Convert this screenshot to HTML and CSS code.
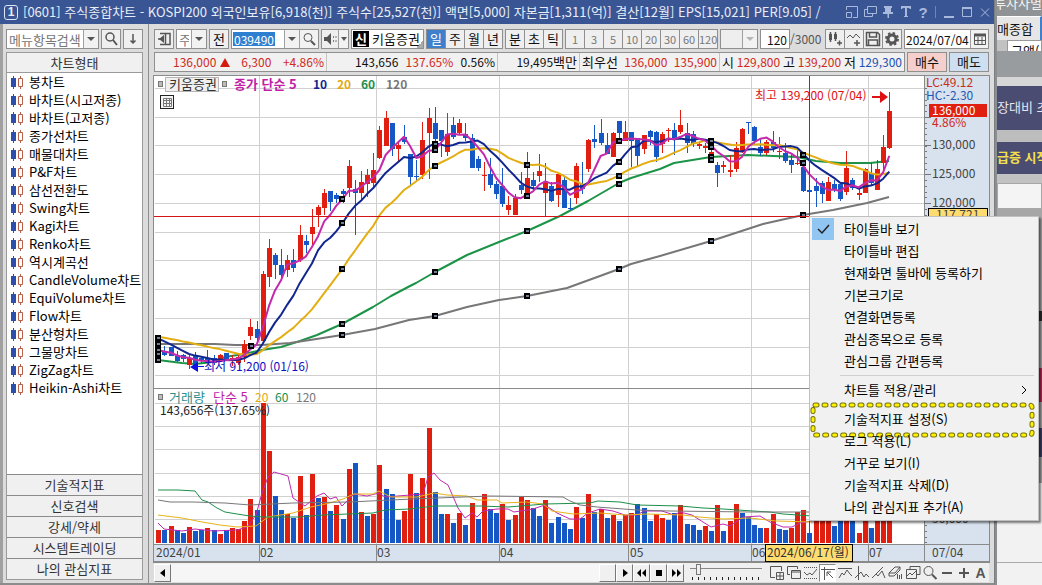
FILE: index.html
```html
<!DOCTYPE html>
<html lang="ko">
<head>
<meta charset="utf-8">
<title>[0601] 주식종합차트</title>
<link rel="stylesheet" href="styles.css">
</head>
<body>
<div class="desktop">
  <section class="window">
    <header class="titlebar">
      <span class="win-no">1</span>
      <h1 class="title">[0601] 주식종합차트 - KOSPI200 외국인보유[6,918(천)] 주식수[25,527(천)] 액면[5,000] 자본금[1,311(억)] 결산[12월] EPS[15,021] PER[9.05] /</h1>
      <div class="win-tools">
        <button aria-label="화면 크기"><svg viewBox="0 0 14 14"><path d="M1.500 5V1.500h11v11H8M1.500 7.500h5v5h-5z"/></svg></button>
        <button aria-label="화면 복사"><svg viewBox="0 0 14 14"><path d="M4.500 1.500h9v7h-9zM4 4.500H1.500v7h8V9"/></svg></button>
        <button aria-label="고정"><svg viewBox="0 0 14 14"><path class="fill" d="M3 1h8v2h-1v4h2v2H8v4H6.500V9H2V7h2V3H3z"/></svg></button>
        <button aria-label="글꼴"><svg viewBox="0 0 14 14"><path class="fill" d="M2 1h10v3h-1L10 3H8v8h1v1H5v-1h1V3H4L3 4H2z"/></svg></button>
        <button class="help" aria-label="도움말">?</button>
        <i class="bar"></i>
        <button aria-label="최소화"><svg viewBox="0 0 14 14"><path d="M2 12h10" stroke-width="2"/></svg></button>
        <button aria-label="최대화"><svg viewBox="0 0 14 14"><path d="M2.500 3.500h9v8h-9z"/><path d="M2 3h10" stroke-width="2"/></svg></button>
        <button aria-label="닫기"><svg viewBox="0 0 14 14"><path d="M3 3.500l8 8M11 3.500l-8 8"/></svg></button>
      </div>
    </header>
    <div class="body">
      <aside class="side">
        <div class="side-search">
          <div class="combo grow"><input class="field muted" aria-label="메뉴항목검색" value="메뉴항목검색"><button class="drop" aria-label="목록 열기"></button></div>
          <button class="btn sq" aria-label="검색"><svg viewBox="0 0 16 16"><circle cx="7" cy="6" r="4" stroke-width="1.500"/><path d="M10 9l4 5" stroke-width="2"/></svg></button>
          <button class="btn sq" aria-label="아래로"><svg viewBox="0 0 16 16"><path d="M8 3v9M5.500 9.500L8 12l2.500-2.500" stroke-width="1.500"/></svg></button>
        </div>
        <nav class="tree">
          <button class="tree-head">차트형태</button>
          <ul class="types" id="types"></ul>
          <button class="tree-tab">기술적지표</button>
          <button class="tree-tab">신호검색</button>
          <button class="tree-tab">강세/약세</button>
          <button class="tree-tab">시스템트레이딩</button>
          <button class="tree-tab">나의 관심지표</button>
        </nav>
      </aside>
      <main class="main">
        <div class="toolbar">
          <button class="btn sq" aria-label="메뉴 접기"><svg viewBox="0 0 16 16"><path d="M4 2.500h10v11H4M9.500 2v11M2 8h4" stroke-width="1.500"/><path class="fill" d="M8 4v8L3 8z"/></svg></button>
          <div class="combo c-kind"><input class="field muted" aria-label="구분" value="주"><button class="drop" aria-label="구분 선택"></button></div>
          <button class="btn sq">전</button>
          <div class="combo c-code"><input class="field num code" aria-label="종목코드" value="039490"><button class="drop" aria-label="최근 종목"></button><button class="drop find" aria-label="종목 검색"><svg viewBox="0 0 16 16"><circle cx="7" cy="6.500" r="4"/><path d="M10 10l4 4" stroke-width="2"/></svg></button></div>
          <div class="group c-sound"><button class="btn" aria-label="소리"><svg viewBox="0 0 16 16"><path class="fill" d="M2 6h3l4-4v12l-4-4H2z"/><path d="M11 6h1M11 10h1M13.500 6h1M13.500 10h1" stroke-width="1.500"/></svg></button><button class="drop" aria-label="소리 선택"></button></div>
          <div class="stock"><b class="tag">신</b><span>키움증권</span></div>
          <div class="group cells"><button class="btn on">일</button><button class="btn">주</button><button class="btn">월</button><button class="btn">년</button></div>
          <div class="group cells"><button class="btn">분</button><button class="btn">초</button><button class="btn">틱</button></div>
          <div class="group cells small muted"><button class="btn">1</button><button class="btn">3</button><button class="btn">5</button><button class="btn">10</button><button class="btn">20</button><button class="btn">30</button><button class="btn">60</button><button class="btn">120</button></div>
          <div class="combo c-blank"><input class="field" aria-label="사용자 주기" disabled><button class="drop off" aria-label="주기 선택" disabled></button></div>
          <div class="count num"><input class="field right num" aria-label="조회 봉수" value="120"><span>/3000</span></div>
          <div class="group cells icons">
            <button class="btn" aria-label="차트 추가"><svg viewBox="0 0 16 16"><path d="M3.500 1v10M8.500 1v9M10 12h5M12.500 9.500v5" stroke-width="1.500"/><path class="fill" d="M2 3h3v6H2zM7 3h3v5H7z"/></svg></button>
            <button class="btn" aria-label="지표 추가"><svg viewBox="0 0 16 16"><path d="M1 7l3-3 3 3 3-4 4 4" stroke-width="1"/><path d="M8 12h6M11 9v6" stroke-width="1.500"/></svg></button>
            <button class="btn" aria-label="저장"><svg viewBox="0 0 16 16"><path d="M1.500 1.500h11l2 2v11h-13zM4.500 2v4h7V2M3.500 14V9h9v5" stroke-width="1.500"/></svg></button>
            <button class="btn" aria-label="설정"><svg viewBox="0 0 16 16"><circle cx="8" cy="8" r="4" stroke-width="3"/><circle cx="8" cy="8" r="6" stroke-width="2" stroke-dasharray="2.400 2.300"/></svg></button>
          </div>
          <div class="combo c-date"><input class="field num" aria-label="기준일" value="2024/07/04"><button class="drop cal" aria-label="달력"><svg viewBox="0 0 16 16"><path d="M2.500 4v9.500h11V4M3 9.500h10M6 6v7M10 6v7" stroke-width="1"/><path d="M2 4h12" stroke-width="3"/></svg></button></div>
        </div>
        <div class="quote">
          <div class="quote-box num">
            <div class="q q1 red"><span>136,000 <i class="up"></i></span><span>6,300</span><span>+4.86%</span></div>
            <div class="q q2"><span>143,656</span><span class="red">137.65%</span><span>0.56%</span></div>
            <div class="q q3"><span>19,495<small>백만</small></span></div>
            <div class="q q4"><small>최우선</small><span class="red">136,000</span><span class="red">135,900</span></div>
            <div class="q q5"><small>시</small><span class="red">129,800</span><small>고</small><span class="red">139,200</span><small>저</small><span class="blue">129,300</span></div>
          </div>
          <button class="btn buy">매수</button>
          <button class="btn sell">매도</button>
        </div>
        <div class="chart"><svg id="chart" viewBox="154 76 835 486" role="img" aria-label="키움증권 일봉 차트"></svg></div>
        <div class="transport">
          <button class="raised" aria-label="왼쪽으로"><svg viewBox="0 0 16 16"><path d="M10 4v8L5 8z"/></svg></button>
          <div class="track"></div>
          <div class="play">
            <button class="raised" aria-label="스크롤 막대"></button>
            <button class="raised" aria-label="재생"><svg viewBox="0 0 16 16"><path d="M6 4v8l5-4z"/></svg></button>
            <button class="raised" aria-label="뒤로"><svg viewBox="0 0 16 16"><path d="M7 4v8L3 8zM12 4v8L8 8z"/></svg></button>
            <button class="raised" aria-label="정지"><svg viewBox="0 0 16 16"><path d="M5 5h6v6H5z"/></svg></button>
            <button class="raised" aria-label="앞으로"><svg viewBox="0 0 16 16"><path d="M4 4v8l4-4zM9 4v8l4-4z"/></svg></button>
          </div>
          <div class="speed"><input type="range" aria-label="재생 속도" min="0" max="11" value="1"></div>
          <div class="tools">
            <button aria-label="화면 추가"><svg viewBox="0 0 16 16"><path d="M6 12.500H1.500v-11h11V6M7.500 7.500h7v7h-7zM11 8v6M8 11h6"/></svg></button>
            <button aria-label="화면 겹침"><svg viewBox="0 0 16 16"><path d="M4 9.500H1.500v-8h10V4M5.500 5.500h9v8h-9zM5 7h10"/></svg></button>
            <button aria-label="구간"><svg viewBox="0 0 16 16"><path d="M1 2.500h13M1 13.500h13" stroke-dasharray="1 1"/><path d="M1 7l3 3 3-2 2 2 5-6"/></svg></button>
            <button class="pressed" aria-label="십자선"><svg viewBox="0 0 16 16"><path d="M1 4.500h14M4.500 2v13M7 7l6 6M7 11V7h4"/></svg></button>
            <button aria-label="수평선"><svg viewBox="0 0 16 16"><path d="M1 3.500h14M2 13l3-5 2 2 3-5 3 4 2 2"/></svg></button>
            <button aria-label="수직선"><svg viewBox="0 0 16 16"><path d="M4.500 1v14M1 13l6-6 3 5 2-3 3 3"/></svg></button>
            <button aria-label="추세선"><svg viewBox="0 0 16 16"><path d="M2 12L12 2M1 13l4-4 2 2 4-5 3 7"/></svg></button>
            <button aria-label="지우개"><svg viewBox="0 0 16 16"><path d="M1 8l6-6h5L7 8zM1 8v3h5l6-6V2M9.500 14V9M11.500 14v-4M13.500 14V9"/></svg></button>
            <button aria-label="비교"><svg viewBox="0 0 16 16"><path d="M5 4V1.500h10v8h-3M1.500 4.500h10v9h-10zM2 11l3-3 2 2 4-4"/></svg></button>
            <button aria-label="돋보기"><svg viewBox="0 0 16 16"><circle cx="6.500" cy="6" r="4.500"/><path d="M10 9.500l4.500 4.500" stroke-width="2"/></svg></button>
            <button aria-label="축소"><svg viewBox="0 0 16 16"><path d="M3 8h10" stroke-width="2"/></svg></button>
            <button aria-label="확대"><svg viewBox="0 0 16 16"><path d="M3 8h10M8 3v10" stroke-width="2"/></svg></button>
            <button class="letter">A</button>
          </div>
        </div>
      </main>
    </div>
  </section>

  <aside class="back">
    <div class="b-title">투자사별</div>
    <div class="b-tab">매종합</div>
    <div class="b-filter">금액(</div>
    <div class="b-gap"></div>
    <div class="b-head">장대비 초</div>
    <div class="b-gap thin"></div>
    <div class="b-head gold">급증 시작</div>
    <div class="b-gap light"></div>
    <div class="b-white"></div>
    <div class="b-rest"><i class="r-black"></i><i class="r-red"></i><i class="r-navy"></i><i class="r-white"></i></div>
  </aside>

  <ul class="menu">
    <li><button class="checked"><svg viewBox="0 0 22 22"><path d="M6 11l4 4 7-8"/></svg>타이틀바 보기</button></li>
    <li><button>타이틀바 편집</button></li>
    <li><button>현재화면 툴바에 등록하기</button></li>
    <li><button>기본크기로</button></li>
    <li><button>연결화면등록</button></li>
    <li><button>관심종목으로 등록</button></li>
    <li><button>관심그룹 간편등록</button></li>
    <li class="sep"></li>
    <li><button>차트틀 적용/관리<svg class="more" viewBox="0 0 8 12"><path d="M2 2l4 4-4 4"/></svg></button></li>
    <li class="marked"><button>기술적지표 설정(S)</button>
      <svg class="callout"><rect class="edge" x="3" y="3" width="219" height="30" rx="2"/><rect class="core" x="3" y="3" width="219" height="30" rx="2"/></svg></li>
    <li><button>로그 적용(L)</button></li>
    <li><button>거꾸로 보기(I)</button></li>
    <li><button>기술적지표 삭제(D)</button></li>
    <li><button>나의 관심지표 추가(A)</button></li>
  </ul>
</div>
<script src="chart.js"></script>
</body>
</html>
```
FILE: styles.css
```css
* { box-sizing: border-box; }
body {
  margin: 0;
  font-family: "Noto Sans CJK KR", sans-serif;
  font-size: 13px;
  line-height: 16px;
  color: #111;
}
button, input { font: inherit; color: inherit; margin: 0; }
button { padding: 0; border: 0; background: none; white-space: nowrap; }
ul { list-style: none; margin: 0; padding: 0; }
svg { display: block; fill: none; stroke: currentColor; }
svg .fill { fill: currentColor; stroke: none; }

.desktop { position: relative; display: flex; height: 100vh; overflow: hidden; background: #999c9f; }
.window { flex: 1; min-width: 0; display: flex; flex-direction: column; background: #dcdcdc; border-right: 1px solid #7c7f82; border-bottom: 2px solid #8c8c8c; }

.titlebar { display: flex; align-items: center; height: 24px; padding: 0 2px 0 4px; background: #3a5594; color: #e8edf8; }
.win-no { width: 14px; height: 15px; border: 1px solid #dfe6f5; border-radius: 3px; font: bold 12px/13px "Liberation Sans", sans-serif; text-align: center; }
.title { flex: 1; min-width: 0; margin: 0 4px 0 5px; overflow: hidden; white-space: nowrap; font-size: 13px; font-weight: normal; line-height: 22px; }
.win-tools { display: flex; align-items: center; gap: 4px; color: #a9b9de; }
.win-tools svg { width: 14px; height: 14px; }
.win-tools .help { width: 12px; font: bold 15px "Liberation Sans", sans-serif; }
.win-tools .bar { width: 1px; height: 12px; margin: 0 2px; background: #6f86bb; }

.body { flex: 1; min-height: 0; display: flex; }
.side { display: flex; flex-direction: column; gap: 3px; width: 149px; padding: 5px 5px 3px 3px; border-left: 3px solid #a0a0a0; border-right: 1px solid #8d8d8d; }
.side-search { display: flex; gap: 2px; }
.grow { flex: 1; }
.btn { height: 20px; border: 1px solid #8f8f8f; background: #efefef; line-height: 16px; }
.sq { width: 20px; }
.btn svg, .drop svg { width: 16px; height: 16px; margin: auto; color: #555; }
.combo { display: flex; height: 20px; border: 1px solid #8f8f8f; background: #fff; }
.field { flex: 1; width: 0; min-width: 0; height: 18px; padding: 0 2px; border: 0; background: none; outline: 0; }
.muted { color: #777; }
.right { text-align: right; }
.num { font-size: 12px; }
.small { font-size: 11px; }
.drop { position: relative; width: 15px; height: 18px; border-left: 1px solid #a0a0a0; background: #f2f2f2; }
.drop:empty::after { content: ""; display: block; margin: auto; width: 0; border: 4px solid transparent; border-top-color: #555; border-bottom: 0; }
.drop.off:empty::after { border-top-color: #b5b5b5; }
.drop.find { width: 19px; }
.drop.cal { width: 18px; }

.tree { flex: 1; display: flex; flex-direction: column; border: 1px solid #9a9a9a; background: #fff; }
.tree-head { height: 20px; background: #f0f0f0; border-bottom: 1px solid #9a9a9a; color: #333; }
.types { flex: 1; }
.types li { display: flex; align-items: center; gap: 6px; height: 18px; padding-left: 4px; }
.types svg { width: 12px; height: 13px; }
.types a { color: #000; text-decoration: none; white-space: nowrap; }
.tree-tab { height: 21px; border-top: 1px solid #8a8a8a; background: #f0f0f0; color: #333; }

.main { flex: 1; min-width: 0; display: flex; flex-direction: column; padding: 5px 5px 1px 5px; }
.toolbar { display: flex; gap: 2px; margin-bottom: 3px; }
.group { display: flex; }
.cells .btn { width: 20px; margin-right: -1px; padding: 0; }
.cells { padding-right: 1px; }
.cells .on { background: #3f7fcb; color: #fff; }
.c-kind { width: 31px; }
.c-code { width: 88px; }
.code { color: #fff; background: linear-gradient(#2f7fd0, #2f7fd0) 1px 2px / 42px 14px no-repeat; }
.c-sound { width: 28px; border: 1px solid #8f8f8f; height: 20px; }
.c-sound .btn { width: 16px; height: 18px; border: 0; }
.c-sound .drop { width: 10px; }
.c-sound .drop::after { border-left-width: 3px; border-right-width: 3px; }
.stock { display: flex; align-items: center; gap: 3px; flex: 1; min-width: 70px; height: 20px; border: 1px solid #8f8f8f; padding-left: 1px; background: linear-gradient(135deg, transparent 50%, #aaa 50%) right bottom / 7px 7px no-repeat #fff; white-space: nowrap; }
.tag { width: 16px; height: 16px; background: #000; color: #fff; text-align: center; line-height: 16px; }
.c-blank { width: 38px; background: #eee; }
.count { display: flex; align-items: center; width: 63px; }
.count .field { flex: none; width: 30px; height: 20px; border: 1px solid #8f8f8f; background: #fff; }
.count span { color: #555; }
.c-date { width: 85px; }
.c-date .field { padding: 0 1px; }

.quote { display: flex; gap: 2px; margin-bottom: 3px; }
.quote-box { flex: 1; display: flex; height: 20px; border: 1px solid #8f8f8f; background: #f1f1f1; white-space: nowrap; }
.quote-box small { font-size: 13px; }
.q { display: flex; align-items: center; justify-content: space-between; border-right: 1px solid #c4c4c4; padding: 0 2px; line-height: 18px; }
.q1 { width: 172px; padding-left: 18px; }
.q2 { width: 171px; padding-left: 28px; }
.q3 { width: 82px; justify-content: flex-end; }
.q4 { width: 140px; }
.q5 { flex: 1; border-right: 0; }
.up { display: inline-block; border: 5px solid transparent; border-bottom: 9px solid #d21c10; border-top: 0; }
.red { color: #d02a1c; }
.blue { color: #1c50b4; }
.buy { width: 40px; background: #f4cfcc; }
.sell { width: 40px; background: #cfdff2; }

.chart { flex: 1; min-height: 0; border: 1px solid #8a8a8a; margin: 0 -1px; background: #fff; }
.chart svg { width: 100%; height: 100%; stroke: none; }
.chart text { font-size: 12px; }
.chart .ko { font-size: 13px; }
.chart .bold { font-weight: bold; }

.transport { display: flex; align-items: center; height: 19px; background: #efefef; }
.raised { width: 17px; height: 18px; border: 1px solid; border-color: #fff #777 #777 #fff; background: #f0f0f0; }
.raised svg { width: 16px; height: 16px; fill: #000; stroke: none; }
.track { flex: 1; height: 18px; background: #f6f6f6; }
.play { display: flex; }
.speed { width: 72px; margin: 0 6px; height: 19px; background: repeating-linear-gradient(90deg, #222 0 1px, transparent 1px 6px) 2px 14px / 68px 3px no-repeat; }
.speed input { display: block; width: 72px; height: 12px; appearance: none; background: linear-gradient(#888, #888) 0 5px / 100% 1px no-repeat; }
.speed input::-webkit-slider-thumb { appearance: none; width: 5px; height: 11px; border: 1px solid #777; background: #f0f0f0; }
.tools { display: flex; color: #555; }
.tools button { width: 17px; height: 18px; }
.tools svg { width: 16px; height: 16px; margin: auto; }
.tools .pressed { background: #fff; border: 1px solid; border-color: #888 #fff #fff #888; }
.tools .letter { font: bold 14px "Liberation Sans", sans-serif; }

.back { display: flex; flex-direction: column; width: 47px; overflow: hidden; background: #c2c2c2; white-space: nowrap; font-size: 13px; border-left: 2px solid #8c8f92; }
.b-title { height: 16px; overflow: hidden; background: #909396; color: #f4f4f4; line-height: 6px; direction: rtl; }
.b-tab { height: 24px; padding-top: 4px; background: #e6e6e6; border-right: 2px solid #3f7fcb; border-top: 1px solid #fff; }
.b-filter { height: 11px; margin-left: 10px; padding-left: 3px; overflow: hidden; background: #fff; border: 1px solid #999; border-bottom: 0; line-height: 20px; }
.b-gap { height: 35px; background: linear-gradient(#999c9f 75%, #d6d6d6 75%); }
.b-gap.thin { height: 12px; background: #bdbdbd; }
.b-gap.light { height: 9px; background: #c2c2c2; }
.b-head { height: 44px; background: #4a4c72; color: #e8e8f0; line-height: 42px; }
.b-head.gold { height: 32px; line-height: 30px; color: #f4e04c; font-weight: bold; }
.b-white { height: 26px; background: #f4f4f4; border: 1px solid #a8a8a8; }
.b-rest { flex: 1; display: flex; flex-direction: column; background: #a6a6a6; }
.r-black { height: 10px; margin-top: 102px; background: #2c2c2c; }
.r-red { height: 34px; margin-top: 47px; background: #b32650; }
.r-navy { height: 29px; margin-top: 26px; background: #3c3f66; }
.r-white { flex: 1; margin-top: 26px; background: linear-gradient(#f2f2f2 79px, #aaa 79px 80px, #f2f2f2 80px); }

.menu { position: absolute; right: 3px; top: 216px; width: 230px; padding: 1px 2px 2px; border: 1px solid #c0c0c0; background: #f1f1f1; box-shadow: 2px 2px 2px rgba(0, 0, 0, .5); }
.menu li { position: relative; }
.menu button { display: flex; align-items: center; width: 100%; height: 22px; padding-left: 32px; color: #000; text-align: left; }
.menu .checked { padding-left: 0; }
.menu .checked svg { width: 22px; height: 22px; margin-right: 10px; background: #91c5f2; color: #222; stroke-width: 1.500; }
.menu .sep { height: 1px; margin: 3px 2px 3px 28px; background: #d0d0d0; }
.menu .more { width: 8px; height: 12px; margin: 0 8px 0 auto; }
.menu .marked { padding: 7px 0 0; }
.menu .callout { position: absolute; left: -2px; top: 1px; width: 225px; height: 37px; pointer-events: none; }
.callout rect { stroke-linecap: round; stroke-dasharray: 2 7; }
.callout .edge { stroke: #77720c; stroke-width: 5; }
.callout .core { stroke: #fff200; stroke-width: 3; }
```
FILE: chart.js
```js
const RED = '#e01f10', BLUE = '#1557c4', GRID = '#d0d0d0';
const X0 = 158.3, STEP = 6.143;
const x = i => X0 + STEP * i;

// one bar per entry: colour, high, body top, body bottom, low, top of the volume bar
const bars = `b 342 350 355 357 530|b 346 352 355 356 530|b 347 347 356 356 526|b 351 356 361 362 530|b 354 355 359 362 533
r 355 358 365 369 527|b 352 355 365 368 531|b 356 358 361 363 530|b 350 358 362 363 528|b 355 358 363 365 530
r 354 355 361 362 534|b 353 353 360 361 530|r 355 358 360 366 528|r 354 357 363 365 529|r 340 344 357 362 521
r 319 327 336 340 499|b 321 329 338 341 510|r 271 274 341 343 403|r 239 248 277 287 451|b 253 255 265 279 496
b 249 265 275 278 510|r 255 260 270 277 514|b 249 260 268 272 518|r 225 235 260 262 476|b 235 241 245 253 515
r 209 227 234 245 474|r 205 207 215 227 498|r 189 193 208 215 497|b 191 191 202 211 511|b 193 195 199 203 505
b 189 191 194 203 519|r 160 166 188 197 469|b 180 189 193 235 463|r 171 182 193 201 512|r 169 175 184 197 516
r 153 170 183 187 514|r 126 130 158 159 465|r 111 118 146 146 489|b 123 123 149 156 494|r 142 145 149 162 520
b 125 137 142 144 511|b 154 154 177 185 474|b 160 176 177 182 493|r 122 140 175 179 478|r 108 118 133 179 428
b 107 123 139 150 492|b 130 130 141 157 514|r 113 134 152 156 514|b 117 125 137 139 523|r 119 123 133 134 513
b 123 134 138 141 525|b 134 138 168 168 503|b 156 159 168 171 519|r 162 175 176 191 494|b 158 174 185 188 509
b 181 184 194 199 513|b 168 186 204 207 504|r 196 205 210 215 520|r 194 198 215 215 515|b 172 185 190 194 497
r 152 178 196 196 500|b 172 180 186 191 508|r 154 171 176 182 516|r 163 182 193 217 500|b 182 186 201 202 523
r 174 174 195 207 517|b 176 180 208 208 523|b 198 208 209 210 529|r 163 166 198 204 507|b 162 184 189 194 518
r 139 140 169 172 494|b 125 139 142 148 512|b 119 133 143 145 509|b 133 145 154 154 518|r 132 133 157 157 515
b 121 121 133 140 521|r 121 132 141 141 515|b 132 132 141 167 513|b 138 138 156 167 504|r 135 135 149 154 508
b 130 131 137 145 521|b 131 132 157 162 514|r 132 134 144 153 518|r 128 130 131 142 520|b 123 130 138 155 513
r 110 125 132 134 505|b 123 133 143 153 524|b 131 134 144 147 525|r 141 144 146 149 530|r 143 146 148 153 526
r 145 152 155 159 531|b 162 165 173 187 505|r 161 165 167 173 531|r 155 170 172 177 521|r 142 148 169 172 504
r 128 129 152 153 513|b 122 122 123 134 517|b 126 127 141 144 525|b 138 147 153 156 528|r 140 142 153 155 528
b 131 142 148 152 514|r 137 151 152 159 529|b 143 153 161 163 530|b 155 160 165 173 528|r 149 163 164 165 512
b 165 167 191 192 510|b 165 190 192 192 533|b 178 186 191 207 520|b 181 183 194 203 520|r 177 182 201 201 518
b 180 184 189 192 526|b 183 184 199 201 520|r 151 168 192 195 518|b 178 180 188 190 518|r 188 193 195 200 533
r 168 169 193 193 520|b 163 173 183 186 528|r 160 169 190 190 519|r 135 147 163 175 517|r 92 111 148 149 515`
  .split(/[|\n]/).map(s => { const [c, ...v] = s.trim().split(' '); return { c: c === 'r' ? RED : BLUE, v: v.map(Number) }; });

// volume bars whose colour differs from the candle above them
const volumeTint = {
  0: RED, 2: RED, 5: RED, 8: RED, 26: BLUE, 28: BLUE, 29: RED, 34: BLUE, 37: BLUE, 39: BLUE, 40: RED, 41: RED, 42: BLUE,
  45: BLUE, 47: RED, 49: RED, 51: RED, 53: RED, 56: RED, 57: BLUE, 58: RED, 59: RED, 62: BLUE, 65: BLUE, 66: BLUE, 68: RED,
  72: RED, 74: RED, 75: BLUE, 76: RED, 77: RED, 79: BLUE, 80: BLUE, 81: RED, 83: BLUE, 85: RED, 86: BLUE, 88: BLUE, 89: RED,
  90: BLUE, 91: RED, 92: BLUE, 94: RED, 95: BLUE, 99: RED, 100: RED, 101: BLUE, 103: RED, 105: RED, 107: RED, 108: RED
};

const out = [];
const rect = (a, b, w, h, f, extra = '') => out.push(`<rect x="${a}" y="${b}" width="${w}" height="${h}" fill="${f}" ${extra}/>`);
const hline = (y, a, b, c) => rect(a, y, b - a, 1, c);
const vline = (a, y, b, c) => rect(a, y, 1, b - y, c);
const path = (pts, c, w) => out.push(`<polyline points="${pts}" fill="none" stroke="${c}" stroke-width="${w}" stroke-linejoin="round"/>`);
const text = (a, b, s, c, cls = '') => out.push(`<text x="${a}" y="${b}" fill="${c}" class="${cls}">${s}</text>`);

rect(154, 76, 771, 468, '#fff');
rect(924, 76, 65, 468, '#d7e2ee');
[88, 117, 145, 174, 203, 232, 260, 289, 318, 347, 375, 403, 426, 449, 473, 496, 519].forEach(y => hline(y, 155, 924, GRID));
[259, 376, 499, 628, 751, 868].forEach(v => vline(v, 76, 544, GRID));
hline(388, 154, 989, '#8a8a8a');

bars.forEach((b, i) => rect(Math.round(x(i)) - 2, b.v[4], 5, 543 - b.v[4], volumeTint[i] || b.c));
path('158,523 164,529 182,531 195,529 213,531 237,530 247,527 256,515 262,493 268,477 274,472 288,476 293,498 305,506 317,496 324,493 330,499 336,497 342,506 354,494 367,496 379,493 385,497 423,494 428,477 434,473 440,480 448,485 458,508 465,518 472,513 477,517 483,511 497,509 508,509 514,512 533,509 545,505 557,513 570,519 580,519 588,513 600,509 613,511 625,515 637,515 644,511 662,511 674,515 680,512 692,515 703,522 711,527 723,524 730,526 743,517 760,516 770,522 783,527 792,527 800,523 812,521', '#c02ab0', 1);
path('158,515 182,518 202,522 220,525 237,527 256,526 268,517 293,513 311,507 330,503 343,499 354,494 373,494 379,491 391,497 417,497 434,493 447,495 467,496 477,500 497,500 502,503 527,502 543,504 552,511 573,514 600,513 625,515 647,514 683,515 699,517 723,519 750,518 776,521 812,522', '#e6b31a', 1);
path('158,490 178,490 195,491 202,500 208,502 217,508 225,512 237,514 250,516 263,517 300,517 323,515 348,514 373,513 385,510 410,509 434,506 480,506 508,507 545,504 590,503 598,501 620,502 637,505 680,506 703,508 723,509 753,511 770,512 783,514 812,516', '#1c8f4a', 1);
path('158,500 170,502 193,502 225,503 250,505 293,503 350,502 390,500 437,498 490,496 563,497 570,501 580,505 597,507 637,510 670,511 750,512 812,512', '#777', 1);

path('158,360 182,363 195,364 213,362 225,357 244,354 262,350 281,347 300,341 317,335 342,324 373,307 391,296 410,286 416,283 435,272 467,255 499,242 527,231 560,216 588,201 619,183 631,178 660,169 674,163 711,157 748,155 797,157 816,161 840,163 870,163 889,161', '#1c9448', 2);
path('158,344 215,344 235,345 262,345 290,343 310,340 342,335 375,329 409,320 435,316 467,307 499,300 527,296 567,288 600,276 619,269 631,264 660,256 711,241 763,224 803,215 833,210 867,203 889,197', '#777', 2);

const history = [335, 335, 335, 335, 335, 335, 335, 335, 335, 335, 327, 327, 327, 327, 327, 349, 349, 349, 349];
const closes = history.concat(bars.map(b => b.c === RED ? b.v[1] : b.v[2]));
const average = n => bars.map((b, i) => {
  const end = i + history.length + 1;
  return x(i).toFixed(1) + ',' + (closes.slice(end - n, end).reduce((s, v) => s + v, 0) / n).toFixed(1);
}).join(' ');

bars.forEach((b, i) => {
  const cx = Math.round(x(i));
  vline(cx, b.v[0], b.v[3], b.c);
  rect(cx - 2, b.v[1], 5, Math.max(1, b.v[2] - b.v[1]), b.c);
});
path(average(20), '#e3ae12', 2);
path(average(10), '#11268f', 2);
path(average(5), '#c529ab', 2);

const knots = { 158: [338, 344, 350, 354, 360], 251: [346], 342: [199, 223, 269, 324, 335], 435: [144, 150, 166, 272, 316], 527: [165, 196, 231, 296], 619: [141, 162, 176, 184, 269], 711: [141, 147, 157, 160, 241], 803: [155, 163, 215] };
for (const [a, ys] of Object.entries(knots)) ys.forEach(y => { rect(a - 3, y - 3, 6, 6, '#000'); rect(a - 1, y - 1, 3, 2, '#6f7f9a'); });

hline(216, 154, 924, '#d21414');
vline(809, 76, 543, '#d21414');

text(755, 100, '최고 139,200 (07/04)', '#e01010');
out.push('<path d="M872 96h8v-5l8 6-8 6v-5h-8z" fill="#e01010"/>');
text(204, 371, '최저 91,200 (01/16)', '#1010c0');
out.push('<path d="M204 366h-6v-4l-8 5 8 5v-5h6z" fill="#1010e0"/>');

const mark = (a, b) => rect(a, b, 4, 5, '#bbb', 'stroke="#777"');
mark(158.5, 81.5);
rect(165.5, 77.5, 53, 14, '#f0f0f0', 'stroke="#b5b5b5"');
text(169, 89, '키움증권', '#333', 'ko');
mark(222.5, 81.5);
text(234, 89, '종가 단순 5', '#c01ea8', 'ko bold');
text(313, 89, '10', '#11268f', 'bold');
text(337, 89, '20', '#e0aa10', 'bold');
text(361, 89, '60', '#1c8f4a', 'bold');
text(386, 89, '120', '#777', 'bold');
rect(160.5, 95.5, 13, 13, '#f4f4f4', 'stroke="#222"');
out.push('<path d="M163.5 98.5h8v8h-8zM163 100.5h9M163 103.5h9M166.5 98v9M169.5 98v9" fill="none" stroke="#777"/>');

mark(158.5, 394.5);
text(169, 402, '거래량', '#2d8f8f', 'ko');
text(213, 402, '단순 5', '#c01ea8', 'ko');
text(255, 402, '20', '#e0aa10');
text(275, 402, '60', '#1c8f4a');
text(296, 402, '120', '#777');
text(160, 415, '143,656주(137.65%)', '#222');

vline(924, 76, 562, '#8a8a8a');
for (let y = 88; y < 543; y += 5.75) hline(Math.round(y), 925, 927, '#777');
[117, 145, 174, 203].forEach(y => hline(y, 925, 931, '#777'));
text(926, 87, 'LC:49.12', '#c83018');
text(926, 100, 'HC:-2.30', '#2458b4');
rect(929, 104, 58, 13, '#e01f10');
text(932, 115, '136,000', '#fff');
text(932, 127, '4.86%', '#d02a1c');
text(932, 149, '130,000', '#444');
text(932, 178, '125,000', '#444');
text(932, 207, '120,000', '#444');
rect(928.5, 208.5, 59, 13, '#ffdc70', 'stroke="#000"');
text(936, 219, '117,721', '#444');
text(932, 523, '50,000', '#444');

rect(154, 544, 835, 18, '#d7e2ee');
hline(544, 154, 989, '#8a8a8a');
hline(561, 154, 989, '#8a8a8a');
[259, 376, 499, 628, 751, 868, 924].forEach(v => vline(v, 544, 562, '#8a8a8a'));
[[156, '2024/01'], [260, '02'], [377, '03'], [500, '04'], [630, '05'], [752, '06'], [869, '07'], [932, '07/04']].forEach(([a, s]) => text(a, 557, s, '#444'));
rect(765.5, 544.5, 87, 17, '#ffdc70', 'stroke="#000"');
text(767, 557, '2024/06/17(월)', '#333');

document.getElementById('chart').innerHTML = out.join('');

const types = ['봉차트', '바차트(시고저종)', '바차트(고저종)', '종가선차트', '매물대차트', 'P&amp;F차트', '삼선전환도', 'Swing차트', 'Kagi차트', 'Renko차트', '역시계곡선', 'CandleVolume차트', 'EquiVolume차트', 'Flow차트', '분산형차트', '그물망차트', 'ZigZag차트', 'Heikin-Ashi차트'];
document.getElementById('types').innerHTML = types.map(t =>
  `<li><svg viewBox="0 0 12 13"><path d="M2.5 0v13" stroke="#2c4fae"/><path d="M0 2h5v9H0z" fill="#2c4fae" stroke="none"/><path d="M9.5 0v2M9.5 11v2M7.5 2.5h4v8h-4z" stroke="#b8604a"/></svg><a href="#">${t}</a></li>`).join('');
```
